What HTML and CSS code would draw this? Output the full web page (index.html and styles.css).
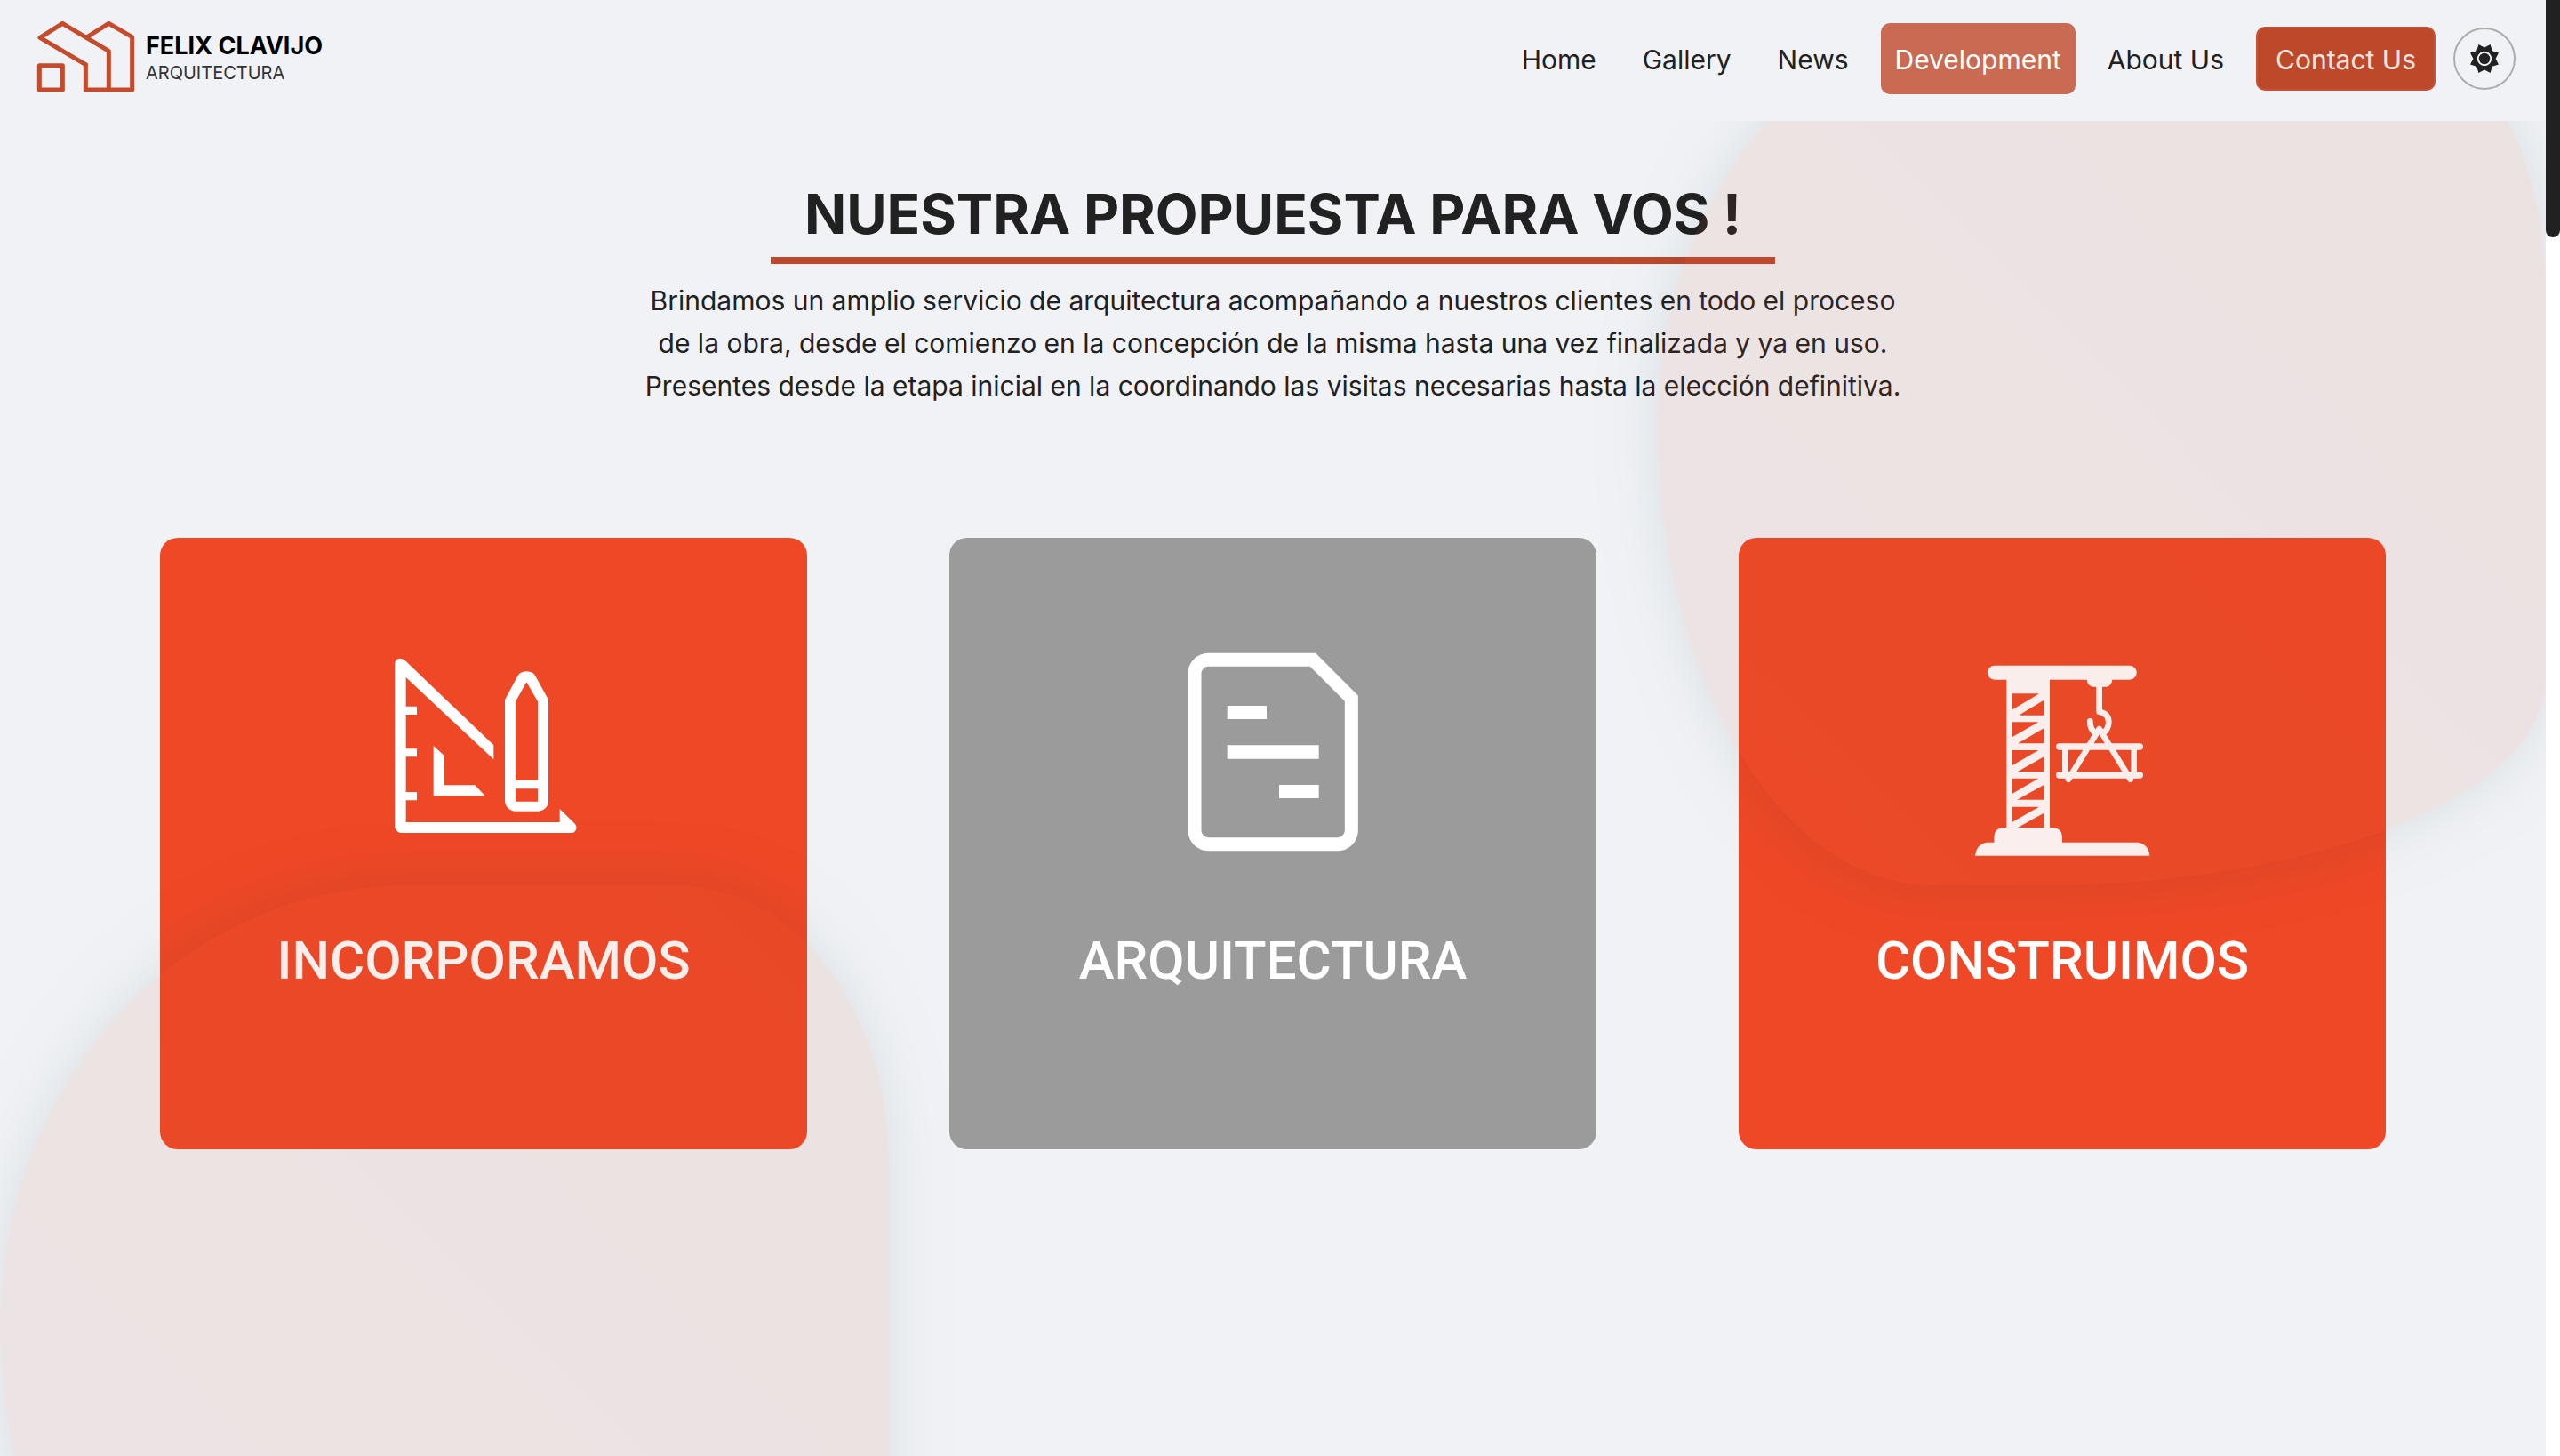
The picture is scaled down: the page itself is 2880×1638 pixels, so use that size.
FILE: index.html
```html
<!DOCTYPE html>
<html lang="es">
<head>
<meta charset="utf-8">
<meta name="viewport" content="width=device-width, initial-scale=1">
<title>Felix Clavijo Arquitectura</title>
<link rel="stylesheet" href="styles.css">
</head>
<body>
<div class="page">
  <header class="header">
    <a class="brand" href="#">
      <svg class="brand-mark" viewBox="120 66 342 252" aria-hidden="true">
        <g fill="none" stroke="#c44b2c" stroke-width="15" stroke-linejoin="round" stroke-linecap="round">
          <path d="M289 218 135 127 211 79 367 172V303"/>
          <path d="M289 218V303H446V125L367 79 292 126"/>
          <path d="M133 221H211V303H133Z"/>
        </g>
      </svg>
      <span class="brand-text">
        <strong class="brand-name">FELIX CLAVIJO</strong>
        <span class="brand-sub">ARQUITECTURA</span>
      </span>
    </a>
    <nav class="nav">
      <a class="nav-link" href="#">Home</a>
      <a class="nav-link" href="#">Gallery</a>
      <a class="nav-link" href="#">News</a>
      <a class="nav-link nav-link-active" href="#" aria-current="page">Development</a>
      <a class="nav-link" href="#">About Us</a>
      <button class="contact" type="button">Contact Us</button>
      <button class="theme" type="button" aria-label="Theme">
        <svg class="theme-icon" viewBox="-18 -18 36 36" aria-hidden="true">
          <path fill="#212121" d="M0-12.6 6.6-16 8.8-8.8 16-6.6 12.6 0 16 6.6 8.8 8.8 6.6 16 0 12.6-6.6 16-8.8 8.8-16 6.6-12.6 0-16-6.6-8.8-8.8-6.6-16Z"/>
          <circle r="7.2" fill="none" stroke="#f0f1f6" stroke-width="2"/>
        </svg>
      </button>
    </nav>
  </header>

  <main class="content">
    <div class="blob blob-top"></div>
    <div class="blob blob-bottom"></div>
    <section class="intro">
      <h1 class="title">NUESTRA PROPUESTA PARA VOS !</h1>
      <p class="lead">Brindamos un amplio servicio de arquitectura acompañando a nuestros clientes en todo el proceso<br>de la obra, desde el comienzo en la concepción de la misma hasta una vez finalizada y ya en uso.<br>Presentes desde la etapa inicial en la coordinando las visitas necesarias hasta la elección definitiva.</p>
    </section>
    <section class="cards">
      <article class="card">
        <svg class="card-icon" viewBox="72 84 720 720" fill="#fff" aria-hidden="true">
          <path d="M133 140Q133 123 150 122 160 122 168 130L466 415V463L170 186V284H207V312H170V427H207V454H170V573H207V601H170V675H689V630L741 681Q748 690 744 700 740 711 730 711H150Q137 707 133 694Z"/>
          <path d="M263 417 300 451V550H403L437 586H263Z"/>
          <path fill-rule="evenodd" d="M504 262 545 185Q554 166 577 166 600 166 609 185L651 262V605Q648 632 620 638H535Q508 632 504 605ZM540 268V533H615V268L577 202ZM540 562V605H615V562Z"/>
        </svg>
        <h2 class="card-title">INCORPORAMOS</h2>
      </article>
      <article class="card card-gray">
        <svg class="card-icon" viewBox="36 84 720 720" fill="#fff" aria-hidden="true">
          <path fill="none" stroke="#fff" stroke-width="45" d="M178 127H531L661 257V703A46 46 0 0 1 615 749H178A46 46 0 0 1 132 703V173A46 46 0 0 1 178 127Z"/>
          <path d="M242 282H375V327H242ZM242 415H551V461H242ZM417 549H551V594H417Z"/>
        </svg>
        <h2 class="card-title">ARQUITECTURA</h2>
      </article>
      <article class="card">
        <svg class="card-icon" viewBox="60 24 720 720" fill="#fff" aria-hidden="true">
          <rect x="168" y="86" width="503" height="48" rx="24"/>
          <path fill-rule="evenodd" d="M232 130H378V634H232ZM252 181V235L342 181ZM358 203 273 254H358ZM252 277V327L340 277ZM358 298 270 349H358ZM252 372V423L340 372ZM358 394 270 444H358ZM252 467V518L340 467ZM358 489 268 539H358ZM252 563V614L342 563ZM358 584 270 633H358Z"/>
          <path d="M190 683V664Q192 636 218 634H392Q418 636 420 664V683H676Q712 690 715 728H126Q130 690 164 683Z"/>
          <path d="M503 132H589Q588 154 570 158H522Q504 154 503 132Z"/>
          <g fill="none" stroke="#fff" stroke-width="20" stroke-linecap="round" stroke-linejoin="round">
            <path d="M545 155V242Q577 248 577 278 576 302 558 314M514 274Q513 302 534 316"/>
            <path d="M441 470 545 300 650 470"/>
            <path stroke-width="22" d="M410 360H682M410 456H682"/>
            <path d="M430 360V456M662 360V456"/>
          </g>
        </svg>
        <h2 class="card-title">CONSTRUIMOS</h2>
      </article>
    </section>
  </main>
</div>
<div class="rail" aria-hidden="true"><div class="rail-thumb"></div></div>
</body>
</html>
```
FILE: styles.css
```css
* {
  box-sizing: border-box;
}

body {
  margin: 0;
  display: flex;
  height: 100vh;
  background: #fff;
  color: #212121;
  font-family: Inter, "Liberation Sans", sans-serif;
  font-size: 30px;
}

.page {
  flex: 1;
  min-width: 0;
  display: flex;
  flex-direction: column;
  overflow: hidden;
  background: #f0f2f6;
}

.header {
  position: relative;
  z-index: 2;
  display: flex;
  flex-shrink: 0;
  align-items: center;
  justify-content: space-between;
  padding: 26px 34px 30px 40px;
  background: #f0f2f6;
}

.brand {
  display: flex;
  align-items: center;
  gap: 10px;
  color: #000;
  text-decoration: none;
}

.brand-mark {
  width: 114px;
  height: 84px;
  margin: -6px 0 -2px;
}

.brand-text {
  display: flex;
  flex-direction: column;
}

.brand-name {
  font-size: 27px;
  font-weight: 700;
  line-height: 32px;
}

.brand-sub {
  font-size: 20px;
  line-height: 28px;
  color: #333;
}

.nav {
  display: flex;
  align-items: center;
  gap: 20px;
}

.nav-link {
  padding: 17px 16px 15px;
  border-radius: 10px;
  line-height: 48px;
  color: #212121;
  text-decoration: none;
}

.nav-link-active {
  background: #c96a52;
  color: #fff;
}

.contact {
  height: 72px;
  padding: 2px 20px 0;
  border: 2px solid #c55337;
  border-radius: 10px;
  background: #be482a;
  color: #f8e4df;
  font: inherit;
}

.theme {
  display: flex;
  align-items: center;
  justify-content: center;
  width: 70px;
  height: 70px;
  padding: 0;
  border: 2px solid #adadad;
  border-radius: 50%;
  background: transparent;
}

.theme-icon {
  width: 36px;
  height: 36px;
}

.content {
  position: relative;
  flex: 1;
  padding-top: 64px;
}

.blob {
  position: absolute;
  z-index: 1;
  width: 1000px;
  height: 1000px;
  background: linear-gradient(45deg, #d05840, #c24c20);
  box-shadow: 0 0 60px #002820;
  opacity: 0.09;
  pointer-events: none;
}

.blob-top {
  top: -140px;
  right: 0;
  border-radius: 42% 23% 57% 31% / 48% 33% 23% 52%;
}

.blob-bottom {
  top: 860px;
  left: 0;
  border-radius: 46% 24% 30% 40% / 49% 31% 30% 50%;
}

.intro {
  display: flex;
  flex-direction: column;
  align-items: center;
  text-align: center;
}

.title {
  margin: 0 0 17px;
  padding: 0 38px 7px;
  border-bottom: 8px solid #be482a;
  font-size: 62px;
  font-weight: 700;
  line-height: 82px;
}

.lead {
  margin: 0;
  line-height: 48px;
}

.cards {
  display: grid;
  grid-template-columns: repeat(3, 1fr);
  gap: 160px;
  padding: 147px 180px;
}

.card {
  display: flex;
  flex-direction: column;
  align-items: center;
  padding: 123px 20px 176px;
  border-radius: 20px;
  background: #ee4827;
  color: #fff;
}

.card-gray {
  background: #9b9b9b;
}

.card-icon {
  width: 240px;
  height: 240px;
}

.card-title {
  margin: 77px 0 0;
  font-family: Roboto, sans-serif;
  font-size: 60px;
  font-weight: 500;
  line-height: 72px;
}

.rail {
  width: 16px;
  background: #fff;
}

.rail-thumb {
  height: 267px;
  border-radius: 0 0 8px 8px;
  background: #212121;
}
```
